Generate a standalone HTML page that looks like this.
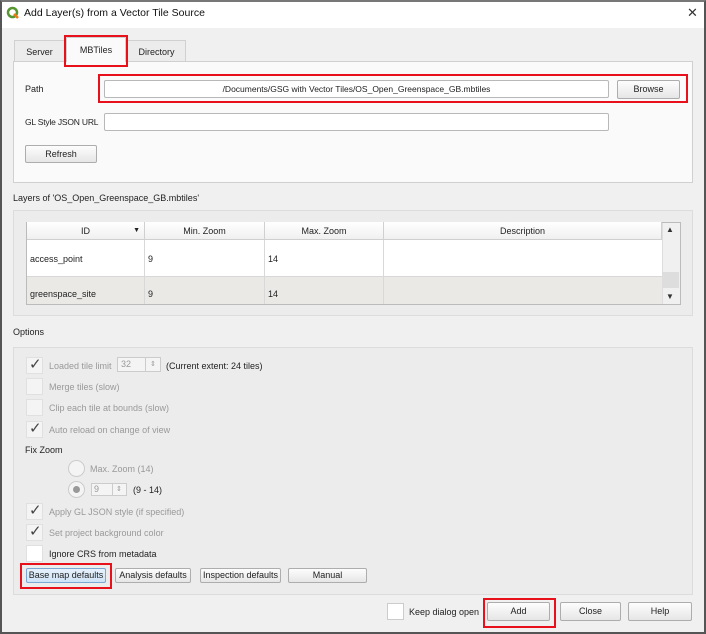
<!DOCTYPE html>
<html><head><meta charset="utf-8"><style>
*{box-sizing:border-box;margin:0;padding:0}
body{width:706px;height:634px;background:#f0f0f0;font-family:"Liberation Sans",sans-serif;font-size:9px;color:#222;position:relative;overflow:hidden}
.a{position:absolute}
.frame{position:absolute;left:0;top:0;width:706px;height:634px;border:2px solid #555;border-top-color:#777;pointer-events:none}
.title{left:0;top:0;width:706px;height:28px;background:#fff}
.btn{position:absolute;background:linear-gradient(#fdfdfd,#e6e6e6);border:1px solid #adadad;border-radius:2px;text-align:center;font-size:9px;line-height:17px;white-space:nowrap}
.inp{position:absolute;background:#fff;border:1px solid #b8b8b8;border-radius:2px}
.red{position:absolute;border:2.5px solid #e8101a}
.cb{position:absolute;width:17px;height:17px;background:#f4f4f4;border:1px solid #e0e0e0}
.cb.w{background:#fff}
.ck{position:absolute;left:2px;top:-3px;font-size:15px;color:#444}
.lbl{position:absolute;color:#999}
.grp{position:absolute;border:1px solid #dcdcdc;background:#ececec}
.th{position:absolute;top:222px;height:18px;line-height:18px;text-align:center;border-right:1px solid #d0d0d0;background:linear-gradient(#fff,#f0f0f0);border-bottom:1px solid #cfcfcf}
.td{position:absolute;border-right:1px solid #d8d8d8;padding-left:3px}
</style></head><body>
<div class="a title"></div>
<svg class="a" style="left:6px;top:6px" width="14" height="14" viewBox="0 0 14 14"><circle cx="6.5" cy="6.5" r="4.5" fill="none" stroke="#589632" stroke-width="2.5"/><path d="M8 8l4 4" stroke="#ee7913" stroke-width="2.5"/></svg>
<div class="a" style="left:24px;top:7px;font-size:10.5px;color:#111">Add Layer(s) from a Vector Tile Source</div>
<div class="a" style="left:687px;top:5px;font-size:13px;color:#333">✕</div>

<div class="a" style="left:14px;top:40px;width:51px;height:22px;border:1px solid #d0d0d0;border-bottom:none;background:#ececec;text-align:center;line-height:22px">Server</div>
<div class="a" style="left:127px;top:40px;width:59px;height:22px;border:1px solid #d0d0d0;border-bottom:none;background:#ececec;text-align:center;line-height:22px">Directory</div>
<div class="a" style="left:13px;top:61px;width:680px;height:122px;border:1px solid #d0d0d0;background:#fafafa"></div>
<div class="a" style="left:66px;top:37px;width:60px;height:25px;border:1px solid #d0d0d0;border-bottom:none;background:#fafafa;text-align:center;line-height:24px">MBTiles</div>
<div class="red" style="left:64px;top:35px;width:64px;height:32px"></div>

<div class="a" style="left:25px;top:84px">Path</div>
<div class="inp" style="left:104px;top:80px;width:505px;height:18px;text-align:center;line-height:16px;font-size:8.5px">/Documents/GSG with Vector Tiles/OS_Open_Greenspace_GB.mbtiles</div>
<div class="btn" style="left:617px;top:80px;width:63px;height:19px">Browse</div>
<div class="red" style="left:98px;top:74px;width:590px;height:29px"></div>
<div class="a" style="left:25px;top:117px;font-size:8.5px;letter-spacing:-0.2px">GL Style JSON URL</div>
<div class="inp" style="left:104px;top:113px;width:505px;height:18px"></div>
<div class="btn" style="left:25px;top:145px;width:72px;height:18px">Refresh</div>

<div class="a" style="left:13px;top:193px">Layers of 'OS_Open_Greenspace_GB.mbtiles'</div>
<div class="grp" style="left:13px;top:210px;width:680px;height:106px"></div>
<div class="a" style="left:26px;top:222px;width:655px;height:83px;border:1px solid #bbb;background:#fff"></div>
<div class="th" style="left:27px;width:118px">ID<span style="position:absolute;right:4px;font-size:7px">▼</span></div>
<div class="th" style="left:145px;width:120px">Min. Zoom</div>
<div class="th" style="left:265px;width:119px">Max. Zoom</div>
<div class="th" style="left:384px;width:278px">Description</div>
<div class="a" style="left:27px;top:276px;width:635px;height:28px;background:#ebe9e6;border-top:1px solid #d8d8d8"></div>
<div class="td" style="left:27px;top:240px;width:118px;height:64px"></div>
<div class="td" style="left:145px;top:240px;width:120px;height:64px"></div>
<div class="td" style="left:265px;top:240px;width:119px;height:64px"></div>
<div class="a" style="left:30px;top:254px">access_point</div><div class="a" style="left:148px;top:254px">9</div><div class="a" style="left:268px;top:254px">14</div>
<div class="a" style="left:30px;top:289px">greenspace_site</div><div class="a" style="left:148px;top:289px">9</div><div class="a" style="left:268px;top:289px">14</div>
<div class="a" style="left:662px;top:223px;width:18px;height:81px;background:#f0f0f0;border-left:1px solid #ddd"></div>
<div class="a" style="left:663px;top:272px;width:16px;height:16px;background:#ddd"></div>
<div class="a" style="left:666px;top:225px;font-size:8px;color:#333">▲</div>
<div class="a" style="left:666px;top:292px;font-size:8px;color:#333">▼</div>

<div class="a" style="left:13px;top:327px">Options</div>
<div class="grp" style="left:13px;top:347px;width:680px;height:248px"></div>

<div class="cb" style="left:26px;top:357px"><span class="ck">✓</span></div><div class="lbl" style="left:49px;top:361px">Loaded tile limit</div>
<div class="a" style="left:117px;top:357px;width:44px;height:15px;border:1px solid #ccc;background:#f4f4f4;color:#999;padding-left:3px;line-height:13px">32<span style="position:absolute;left:27px;top:0;height:13px;border-left:1px solid #ccc;padding-left:4px;font-size:7px">⇕</span></div>
<div class="a" style="left:166px;top:361px">(Current extent: 24 tiles)</div>
<div class="cb" style="left:26px;top:378px"></div><div class="lbl" style="left:49px;top:382px">Merge tiles (slow)</div>
<div class="cb" style="left:26px;top:399px"></div><div class="lbl" style="left:49px;top:403px">Clip each tile at bounds (slow)</div>
<div class="cb" style="left:26px;top:421px"><span class="ck">✓</span></div><div class="lbl" style="left:49px;top:425px">Auto reload on change of view</div>
<div class="a" style="left:25px;top:445px">Fix Zoom</div>
<div class="a" style="left:68px;top:460px;width:17px;height:17px;border-radius:50%;border:1px solid #ccc;background:#f4f4f4"></div><div class="lbl" style="left:90px;top:464px">Max. Zoom (14)</div>
<div class="a" style="left:68px;top:481px;width:17px;height:17px;border-radius:50%;border:1px solid #ccc;background:#f4f4f4"><div class="a" style="left:4px;top:4px;width:7px;height:7px;border-radius:50%;background:#999"></div></div>
<div class="a" style="left:91px;top:483px;width:36px;height:13px;border:1px solid #ccc;background:#f4f4f4;color:#999;padding-left:2px;line-height:11px">9<span style="position:absolute;left:20px;top:0;height:11px;border-left:1px solid #ccc;padding-left:3px;font-size:7px">⇕</span></div>
<div class="a" style="left:133px;top:485px">(9 - 14)</div>
<div class="cb" style="left:26px;top:503px"><span class="ck">✓</span></div><div class="lbl" style="left:49px;top:507px">Apply GL JSON style (if specified)</div>
<div class="cb" style="left:26px;top:524px"><span class="ck">✓</span></div><div class="lbl" style="left:49px;top:528px">Set project background color</div>
<div class="cb w" style="left:26px;top:545px"></div><div class="a" style="left:49px;top:549px">Ignore CRS from metadata</div>

<div class="btn" style="left:26px;top:568px;width:80px;height:15px;line-height:13px;background:linear-gradient(#e6f1fb,#cfe4f7);border-color:#7aa7d4">Base map defaults</div>
<div class="red" style="left:20px;top:563px;width:92px;height:26px"></div>
<div class="btn" style="left:115px;top:568px;width:76px;height:15px;line-height:13px">Analysis defaults</div>
<div class="btn" style="left:200px;top:568px;width:81px;height:15px;line-height:13px">Inspection defaults</div>
<div class="btn" style="left:288px;top:568px;width:79px;height:15px;line-height:13px">Manual</div>

<div class="cb w" style="left:387px;top:603px;border-color:#ccc"></div>
<div class="a" style="left:409px;top:607px">Keep dialog open</div>
<div class="btn" style="left:487px;top:602px;width:63px;height:19px">Add</div>
<div class="red" style="left:483px;top:598px;width:73px;height:30px"></div>
<div class="btn" style="left:560px;top:602px;width:61px;height:19px">Close</div>
<div class="btn" style="left:628px;top:602px;width:64px;height:19px">Help</div>
<div class="frame"></div>
</body></html>
